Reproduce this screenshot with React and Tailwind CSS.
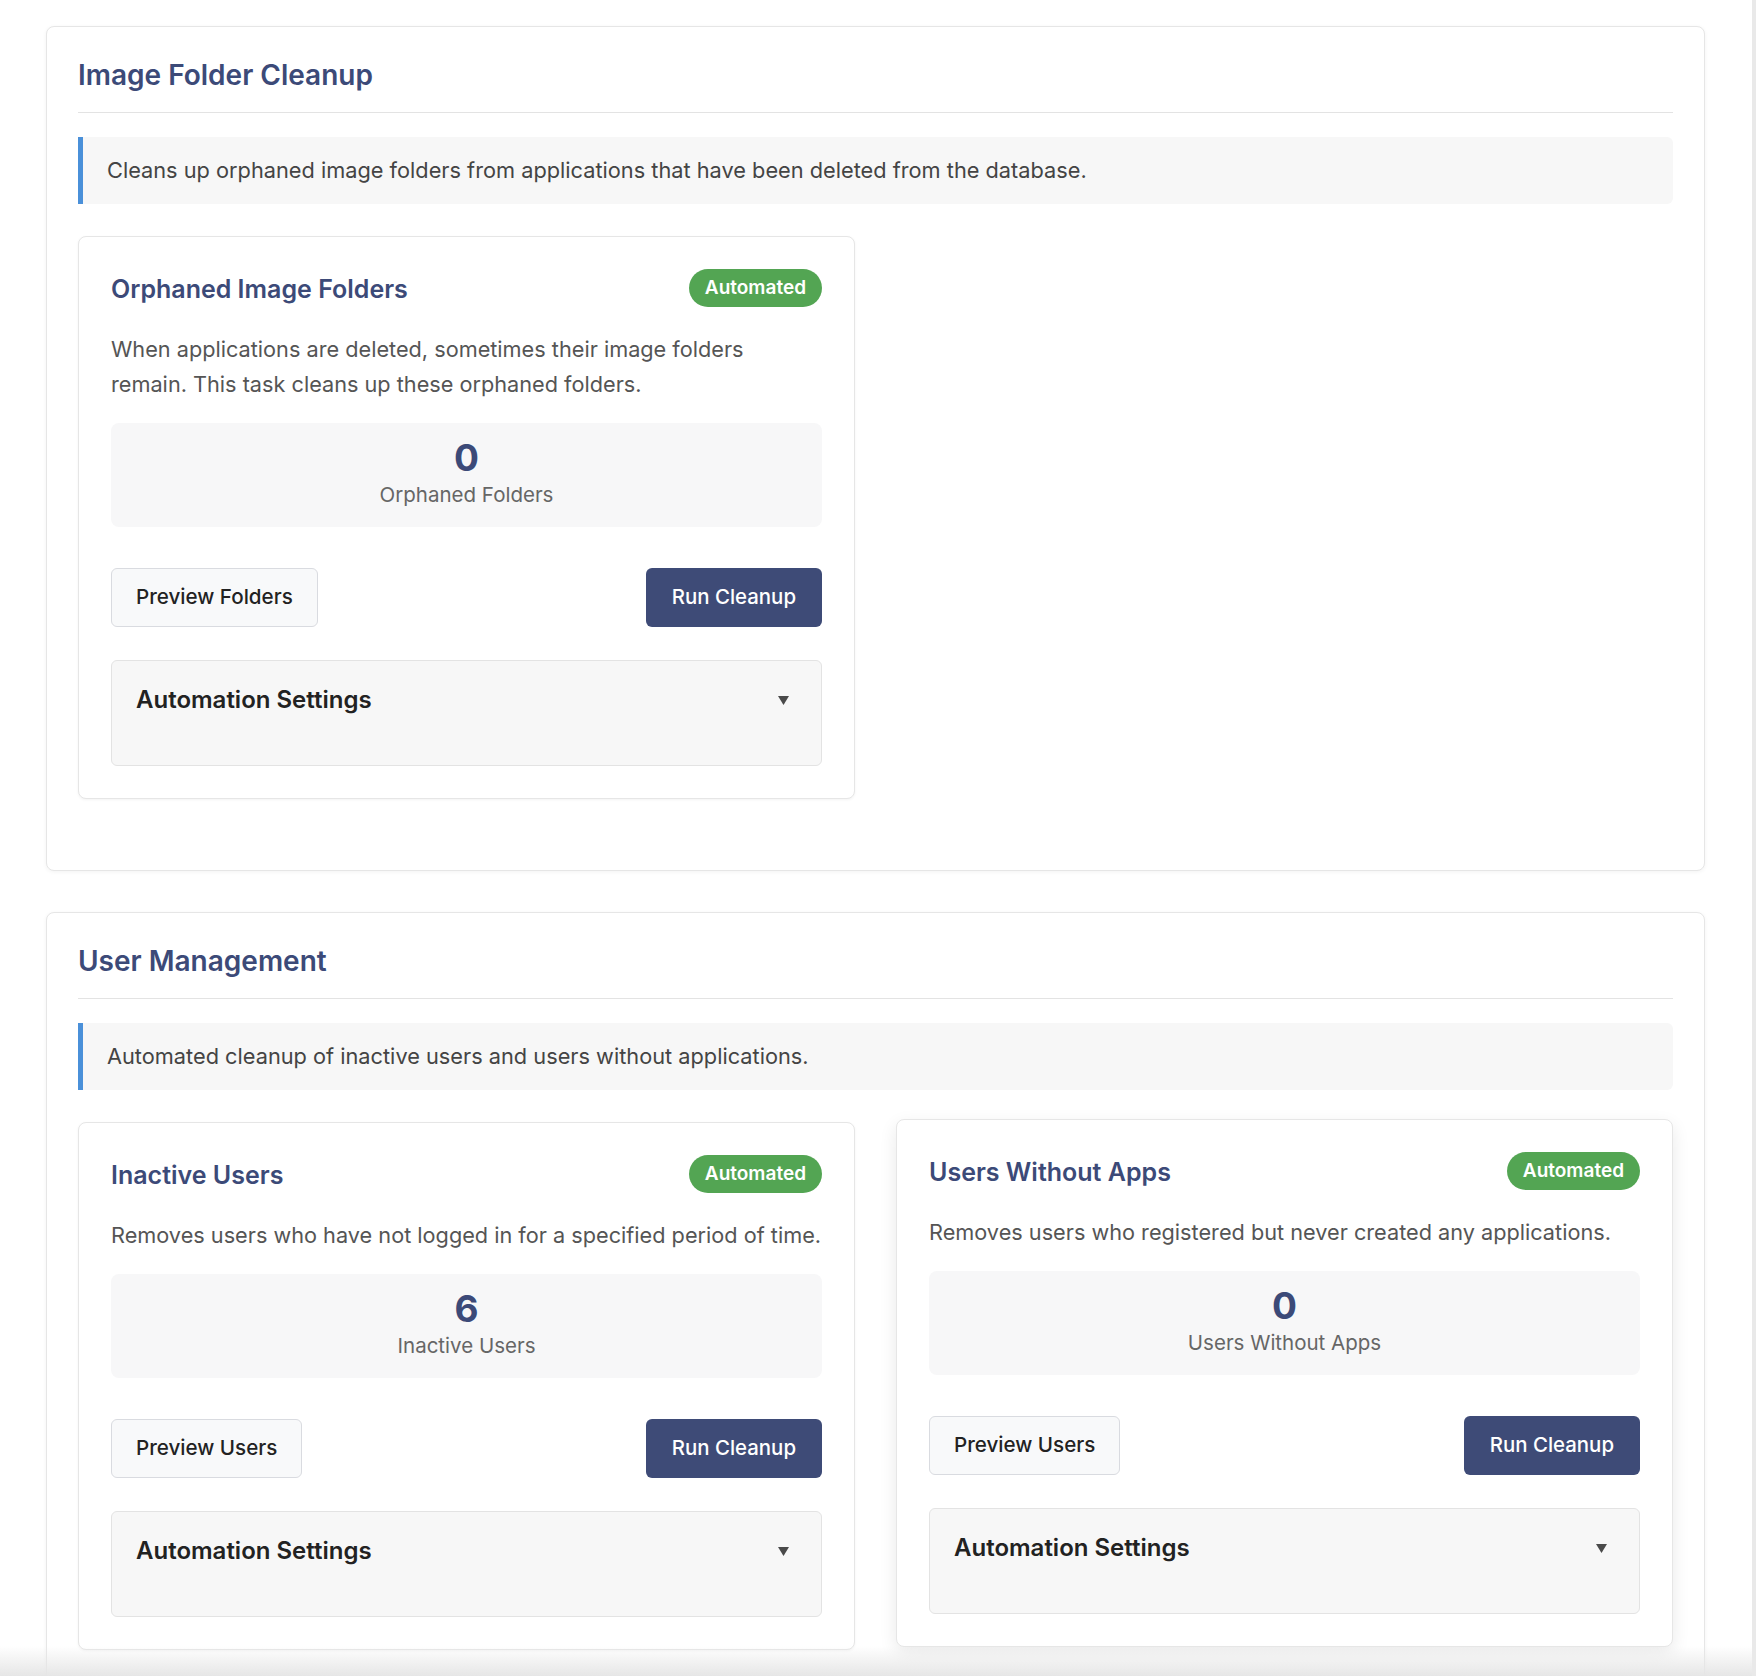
import React from 'react';

const StatBox = ({ value, label }) => (
  <div className="rounded-lg bg-[#f7f7f8] pt-[18px] pb-[18px] text-center">
    <div className="text-[37px] leading-[34px] font-bold text-[#3c4a78]">{value}</div>
    <div className="mt-[6px] text-[20.5px] leading-[28px] text-[#666]">{label}</div>
  </div>
);

const TaskCard = ({ title, description, value, label, previewLabel, hovered }) => (
  <div
    className={
      hovered
        ? 'rounded-lg border border-[#e6e6e6] bg-white p-8 -translate-y-[3px] shadow-[0_6px_18px_rgba(0,0,0,0.09)]'
        : 'rounded-lg border border-[#e6e6e6] bg-white p-8 shadow-[0_1px_3px_rgba(0,0,0,0.05)]'
    }
  >
    {/* header */}
    <div className="flex items-center justify-between h-[38px]">
      <h3 className="mt-[2px] text-[25px] leading-[30px] font-semibold text-[#3c4a78]">{title}</h3>
      <span className="rounded-full bg-[#53a553] px-4 h-[38px] flex items-center text-[19px] font-semibold text-white">
        Automated
      </span>
    </div>

    <p className="mt-[25px] mb-[21px] text-[21.7px] leading-[35px] text-[#555]">{description}</p>

    <StatBox value={value} label={label} />

    {/* actions */}
    <div className="mt-[41px] flex items-center justify-between">
      <button className="h-[59px] rounded-md border border-[#d9dbe0] bg-[#f8f9fa] px-6 text-[20.6px] font-medium text-[#222]">
        {previewLabel}
      </button>
      <button className="h-[59px] rounded-md bg-[#3e4b77] px-[26px] text-[20.4px] font-medium text-white">
        Run Cleanup
      </button>
    </div>

    {/* automation settings */}
    <div className="mt-[33px] rounded-md border border-[#e3e3e3] bg-[#f7f7f7] pl-6 pr-8 pt-6 pb-[50px]">
      <div className="flex items-center justify-between h-[30px]">
        <span className="text-[24px] font-semibold text-[#222]">Automation Settings</span>
        <svg width="11" height="9" viewBox="0 0 11 9">
          <polygon points="0,0 11,0 5.5,9" fill="#4a4a4a" />
        </svg>
      </div>
    </div>
  </div>
);

const Section = ({ title, info, children }) => (
  <section className="rounded-lg border border-[#e6e6e6] bg-white px-[31px] pt-[31px] pb-[71px] shadow-[0_1px_4px_rgba(0,0,0,0.05)]">
    <h2 className="border-b border-[#e3e3e3] pb-[20px] text-[28px] leading-[34px] font-semibold text-[#3c4a78]">
      {title}
    </h2>
    <div className="mt-[24px] mb-8 rounded-r-md border-l-[5px] border-[#4a90d9] bg-[#f7f7f7] py-[18px] pl-6 text-[21.75px] leading-[31px] text-[#444]">
      {info}
    </div>
    <div className="grid grid-cols-2 gap-[41px] items-start">{children}</div>
  </section>
);

export default function App() {
  return (
    <div
      className="relative h-[1676px] overflow-hidden bg-white border-r-4 border-[#e9e9e9]"
      style={{ fontFamily: 'Inter, "Noto Sans", sans-serif' }}
    >
      <div className="flex flex-col gap-[41px] pl-[46px] pr-[47px] pt-[26px]">
        <Section
          title="Image Folder Cleanup"
          info="Cleans up orphaned image folders from applications that have been deleted from the database."
        >
          <TaskCard
            title="Orphaned Image Folders"
            description="When applications are deleted, sometimes their image folders remain. This task cleans up these orphaned folders."
            value="0"
            label="Orphaned Folders"
            previewLabel="Preview Folders"
          />
        </Section>

        <Section
          title="User Management"
          info="Automated cleanup of inactive users and users without applications."
        >
          <TaskCard
            title="Inactive Users"
            description="Removes users who have not logged in for a specified period of time."
            value="6"
            label="Inactive Users"
            previewLabel="Preview Users"
          />
          <TaskCard
            title="Users Without Apps"
            description="Removes users who registered but never created any applications."
            value="0"
            label="Users Without Apps"
            previewLabel="Preview Users"
            hovered
          />
        </Section>
      </div>

      {/* bottom edge shade */}
      <div className="absolute bottom-0 left-0 right-0 h-[30px] bg-gradient-to-t from-[#e6e6e6] to-transparent" />
    </div>
  );
}
